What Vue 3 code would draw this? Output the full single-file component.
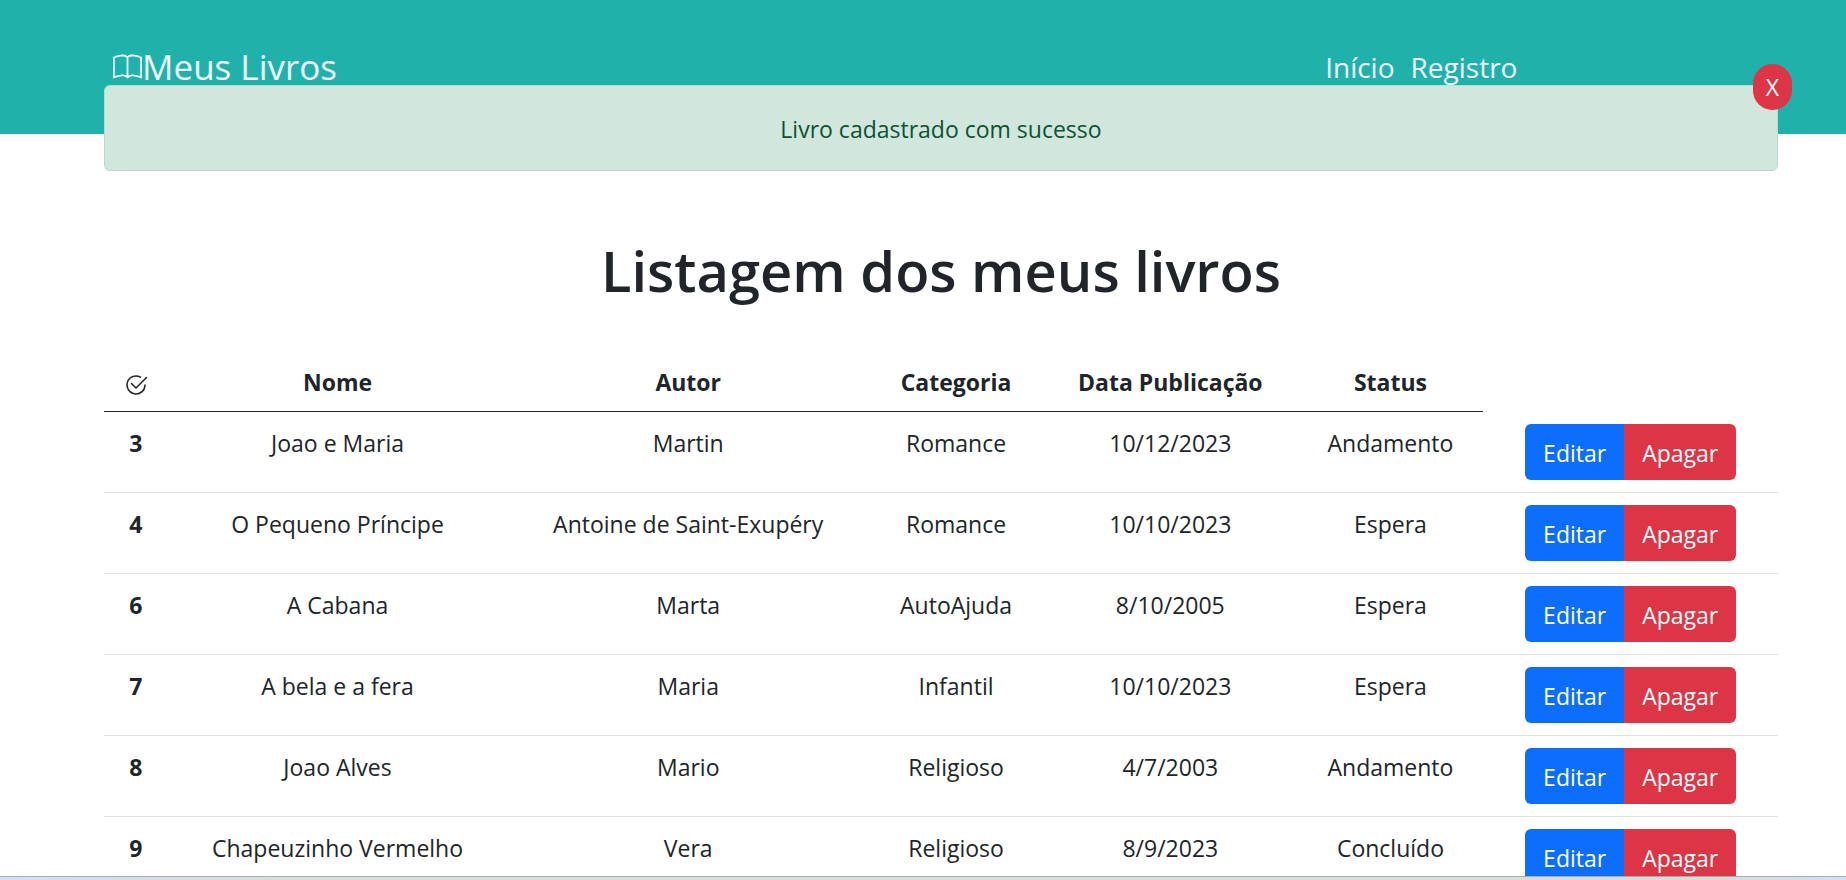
<script setup>
import { ref } from 'vue'

const showAlert = ref(true)

const books = ref([
  { id: 3, name: 'Joao e Maria', author: 'Martin', category: 'Romance', date: '10/12/2023', status: 'Andamento' },
  { id: 4, name: 'O Pequeno Príncipe', author: 'Antoine de Saint-Exupéry', category: 'Romance', date: '10/10/2023', status: 'Espera' },
  { id: 6, name: 'A Cabana', author: 'Marta', category: 'AutoAjuda', date: '8/10/2005', status: 'Espera' },
  { id: 7, name: 'A bela e a fera', author: 'Maria', category: 'Infantil', date: '10/10/2023', status: 'Espera' },
  { id: 8, name: 'Joao Alves', author: 'Mario', category: 'Religioso', date: '4/7/2003', status: 'Andamento' },
  { id: 9, name: 'Chapeuzinho Vermelho', author: 'Vera', category: 'Religioso', date: '8/9/2023', status: 'Concluído' },
])

function remove(id) {
  books.value = books.value.filter((b) => b.id !== id)
}
</script>

<template>
  <div class="page">
    <div class="content">
      <header class="top">
        <a class="brand" href="#">
          <svg class="book" viewBox="0 0 16 16" fill="currentColor" aria-hidden="true">
            <path d="M1 2.828c.885-.37 2.154-.769 3.388-.893 1.33-.134 2.458.063 3.112.752v9.746c-.935-.53-2.12-.603-3.213-.493-1.18.12-2.37.461-3.287.811V2.828zm7.5-.141c.654-.689 1.782-.886 3.112-.752 1.234.124 2.503.523 3.388.893v9.923c-.918-.35-2.107-.692-3.287-.81-1.094-.111-2.278-.039-3.213.492V2.687zM8 1.783C7.015.936 5.587.81 4.287.94c-1.514.153-3.042.672-3.994 1.105A.5.5 0 0 0 0 2.5v11a.5.5 0 0 0 .707.455c.882-.4 2.303-.881 3.68-1.02 1.409-.142 2.59.087 3.223.877a.5.5 0 0 0 .78 0c.633-.79 1.814-1.019 3.222-.877 1.378.139 2.8.62 3.681 1.02A.5.5 0 0 0 16 13.5v-11a.5.5 0 0 0-.293-.455c-.952-.433-2.48-.952-3.994-1.105C10.413.809 8.985.936 8 1.783z" />
          </svg>
          <span>Meus Livros</span>
        </a>
        <nav class="links">
          <a href="#inicio">Início</a>
          <a href="#registro">Registro</a>
        </nav>
      </header>

      <main class="main">
        <div v-if="showAlert" class="alert" role="alert">
          Livro cadastrado com sucesso
          <button class="close" type="button" @click="showAlert = false">X</button>
        </div>

        <h1 class="title">Listagem dos meus livros</h1>

        <table class="books">
          <colgroup>
            <col class="c-id" />
            <col class="c-name" />
            <col class="c-author" />
            <col class="c-category" />
            <col class="c-date" />
            <col class="c-status" />
            <col class="c-actions" />
          </colgroup>
          <thead>
            <tr>
              <th scope="col">
                <svg class="check" viewBox="0 0 16 16" fill="currentColor" aria-hidden="true">
                  <path d="M2.5 8a5.5 5.5 0 0 1 8.25-4.764.5.5 0 0 0 .5-.866A6.5 6.5 0 1 0 14.5 8a.5.5 0 0 0-1 0 5.5 5.5 0 1 1-11 0z" />
                  <path d="M15.354 3.354a.5.5 0 0 0-.708-.708L8 9.293 5.354 6.646a.5.5 0 1 0-.708.708l3 3a.5.5 0 0 0 .708 0l7-7z" />
                </svg>
              </th>
              <th scope="col">Nome</th>
              <th scope="col">Autor</th>
              <th scope="col">Categoria</th>
              <th scope="col">Data Publicação</th>
              <th scope="col">Status</th>
            </tr>
          </thead>
          <tbody>
            <tr v-for="book in books" :key="book.id">
              <th scope="row">{{ book.id }}</th>
              <td>{{ book.name }}</td>
              <td>{{ book.author }}</td>
              <td>{{ book.category }}</td>
              <td>{{ book.date }}</td>
              <td>{{ book.status }}</td>
              <td class="actions">
                <div class="group">
                  <button class="btn edit" type="button">Editar</button>
                  <button class="btn delete" type="button" @click="remove(book.id)">Apagar</button>
                </div>
              </td>
            </tr>
          </tbody>
        </table>
      </main>
    </div>
    <div class="strip"></div>
  </div>
</template>

<style>
body {
  background: #fff;
}
</style>

<style scoped>
.page {
  display: flex;
  flex-direction: column;
  height: 100vh;
  overflow: hidden;
  color: #212529;
  font-family: "Open Sans", "Noto Sans", sans-serif;
  font-size: 23px;
  line-height: 36px;
}
.page *,
.page {
  box-sizing: border-box;
}
.content {
  flex: 1;
  min-height: 0;
  overflow: hidden;
}
.top {
  display: flex;
  align-items: center;
  justify-content: space-between;
  height: 134px;
  padding: 0 17.8% 0 113px;
  background: #20b2aa;
}
.brand,
.links a {
  color: aliceblue;
  text-decoration: none;
}
.brand {
  display: flex;
  align-items: center;
  font-size: 35px;
}
.book {
  width: 29px;
  height: 29px;
}
.links {
  display: flex;
  gap: 16px;
  font-size: 28px;
}
.main {
  margin: -49px 68px 0 104px;
}
.alert {
  position: relative;
  padding: 25px 24px 23px;
  border: 1px solid #badbcc;
  border-radius: 6px;
  background: #d1e7dd;
  color: #0f5132;
  text-align: center;
}
.close {
  position: absolute;
  top: -22px;
  right: -15px;
  width: 39px;
  height: 46px;
  padding: 0;
  border: 0;
  border-radius: 20px;
  background: #dc3545;
  color: #fff;
  font: inherit;
}
.title {
  margin: 63px 0 45px;
  font-size: 56px;
  font-weight: 600;
  line-height: 72px;
  text-align: center;
}
.books {
  width: 100%;
  table-layout: fixed;
  border-collapse: separate;
  border-spacing: 0;
  text-align: center;
}
.books th,
.books td {
  padding: 13px 0 11px;
  vertical-align: top;
  border-bottom: 1px solid #dee2e6;
}
.books .actions {
  padding: 12px 0;
}
.books thead th {
  border-bottom-color: #212529;
}
.c-id { width: 3.8%; }
.c-name { width: 20.3%; }
.c-author { width: 21.6%; }
.c-category { width: 10.4%; }
.c-date { width: 15.2%; }
.c-status { width: 11.1%; }
.c-actions { width: 17.6%; }
.check {
  display: block;
  width: 24px;
  height: 24px;
  margin: 9px auto 0;
}
.group {
  display: inline-flex;
  vertical-align: top;
  border-radius: 6px;
  overflow: hidden;
}
.btn {
  height: 56px;
  padding: 2px 18px 0;
  border: 0;
  color: #fff;
  font: inherit;
}
.edit {
  background: #0d6efd;
}
.delete {
  background: #dc3545;
}
.strip {
  height: 4px;
  border-top: 1px solid #a9aeae;
  background: linear-gradient(to right, #d3dff3, #dadbdb 15%, #dadbdb 94%, #d3dff3);
}
</style>
